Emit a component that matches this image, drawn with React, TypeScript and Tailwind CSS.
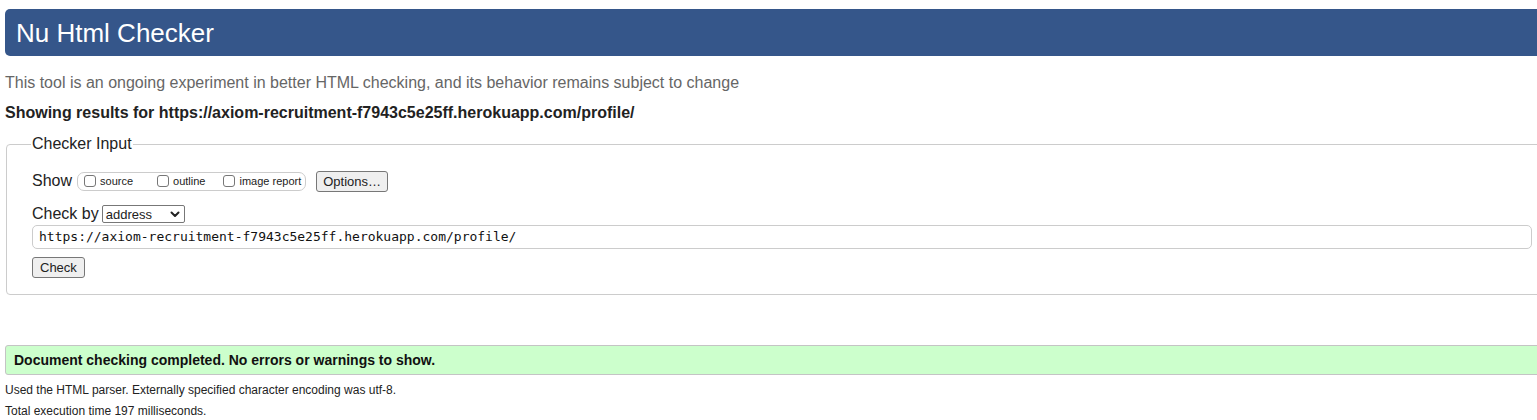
import React from 'react';

const sans = "font-['Liberation_Sans',Arial,sans-serif]";

export default function App() {
  const url = 'https://axiom-recruitment-f7943c5e25ff.herokuapp.com/profile/';

  return (
    <div className={`${sans} bg-white text-[#222] w-[1537px] h-[420px] overflow-hidden`}>
      {/* Header */}
      <div className="ml-[5px] mt-[9px] -mr-[10px] h-[47px] bg-[#35568a] rounded-[5px] flex items-center pl-[11px]">
        <h1 className="text-white text-[26px] leading-none">Nu Html Checker</h1>
      </div>

      <p className="ml-[5px] mt-[18px] text-[16px] leading-[18px] text-[#666]">
        This tool is an ongoing experiment in better HTML checking, and its behavior remains subject to change
      </p>
      <p className="ml-[5px] mt-[12px] text-[16px] leading-[18px] font-bold text-[#222]">
        Showing results for {url}
      </p>

      {/* Checker input */}
      <fieldset className="ml-[6px] mt-[13px] -mr-[4px] border border-[#ccc] rounded-[4px] pl-[25px] pr-[9px] pt-[17px] pb-[15px]">
        <legend className="px-[1px] -ml-[1px] text-[16px] leading-[18px] text-[#222]">Checker Input</legend>

        <div className="flex items-center h-[22px]">
          <span className="text-[16px] mr-[5px]">Show</span>
          <div className="flex items-center h-[19px] border border-[#ccc] rounded-[7px] pl-[6px] pr-[4px]">
            <label className="flex items-center text-[11px]">
              <span className="inline-block w-[12px] h-[12px] border border-[#777] rounded-[3px] bg-white mr-[4px]" />
              source
            </label>
            <label className="flex items-center text-[11px] ml-[24px]">
              <span className="inline-block w-[12px] h-[12px] border border-[#777] rounded-[3px] bg-white mr-[4px]" />
              outline
            </label>
            <label className="flex items-center text-[11px] ml-[18px]">
              <span className="inline-block w-[12px] h-[12px] border border-[#777] rounded-[3px] bg-white mr-[4px]" />
              image report
            </label>
          </div>
          <button className="ml-[10px] h-[21px] px-[6px] border border-[#777] rounded-[3px] bg-[#efefef] text-[13px] leading-none">
            Options…
          </button>
        </div>

        <div className="flex items-center mt-[12px] h-[20px]">
          <span className="text-[16px] mr-[3px]">Check by</span>
          <div className="flex items-center justify-between w-[83px] h-[18px] border border-[#777] rounded-[2px] bg-white pl-[3px] pr-[4px]">
            <span className="text-[13px] leading-none">address</span>
            <svg width="10" height="7" viewBox="0 0 10 7" fill="none">
              <path d="M1.5 1.5 5 5l3.5-3.5" stroke="#222" strokeWidth="2" strokeLinecap="round" strokeLinejoin="round" />
            </svg>
          </div>
        </div>

        <div className="mt-[1px] h-[24px] w-[1500px] border border-[#ccc] rounded-[5px] flex items-center pl-[6px] font-['DejaVu_Sans_Mono',monospace] text-[13px] text-[#111]">
          {url}
        </div>

        <button className="mt-[8px] h-[21px] px-[7px] border border-[#777] rounded-[3px] bg-[#efefef] text-[13px] leading-none">
          Check
        </button>
      </fieldset>

      {/* Result */}
      <div className="ml-[5px] mt-[50px] -mr-[10px] h-[30px] bg-[#ccffcc] border border-[#c4c4c4] rounded-[3px] flex items-center pl-[8px]">
        <p className="text-[14px] font-bold text-[#111]">Document checking completed. No errors or warnings to show.</p>
      </div>

      <p className="ml-[5px] mt-[8px] text-[12px] leading-[14px] text-[#222]">
        Used the HTML parser. Externally specified character encoding was utf-8.
      </p>
      <p className="ml-[5px] mt-[7px] text-[12px] leading-[14px] text-[#222]">Total execution time 197 milliseconds.</p>
    </div>
  );
}
